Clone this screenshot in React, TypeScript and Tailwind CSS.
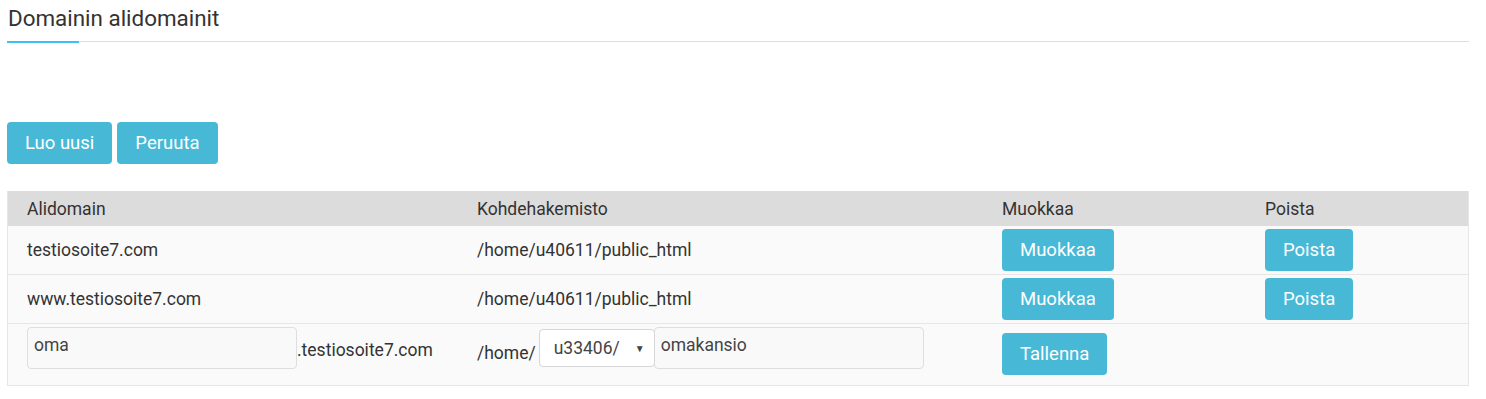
export default function App() {
  const rows = [
    { domain: "testiosoite7.com", dir: "/home/u40611/public_html" },
    { domain: "www.testiosoite7.com", dir: "/home/u40611/public_html" },
  ];

  const btn =
    "rounded-[4px] bg-[#47b9d6] px-[18px] h-[42px] text-[18.5px] text-white leading-none";

  return (
    <div className="min-h-[399px] bg-white font-['Roboto',sans-serif] text-[#333]">
      {/* Title */}
      <div className="px-[7px] pt-[5px]">
        <h1 className="pl-[1px] text-[22.4px] leading-[26px] text-[#333]">
          Domainin alidomainit
        </h1>
        <div className="mt-[10px] flex w-[1462px] items-start">
          <div className="h-[2px] w-[72px] bg-[#3cc2ee]" />
          <div className="h-[1px] flex-1 bg-[#dedede]" />
        </div>
      </div>

      {/* Actions */}
      <div className="mt-[79px] flex gap-[5px] px-[7px]">
        <button className={btn}>Luo uusi</button>
        <button className={btn}>Peruuta</button>
      </div>

      {/* Table */}
      <div className="mx-[7px] mt-[27px] w-[1462px] border-x border-b border-[#e6e6e6] text-[17.5px]">
        <div className="flex h-[35px] items-center bg-[#dcdcdc] pt-[1px]">
          <div className="w-[450px] pl-[19px]">Alidomain</div>
          <div className="w-[525px] pl-[19px]">Kohdehakemisto</div>
          <div className="w-[263px] pl-[19px]">Muokkaa</div>
          <div className="pl-[19px]">Poista</div>
        </div>

        {rows.map((r) => (
          <div
            key={r.domain}
            className="flex h-[49px] items-center border-b border-[#e6e6e6] bg-[#fafafa]"
          >
            <div className="w-[450px] pl-[19px]">{r.domain}</div>
            <div className="w-[525px] pl-[19px]">{r.dir}</div>
            <div className="w-[263px] pl-[19px]">
              <button className={btn}>Muokkaa</button>
            </div>
            <div className="pl-[19px]">
              <button className={btn}>Poista</button>
            </div>
          </div>
        ))}

        {/* New row */}
        <div className="flex h-[61px] items-start bg-[#fafafa]">
          <div className="flex w-[450px] items-end pl-[19px] pt-[3px]">
            <input
              defaultValue="oma"
              className="h-[42px] w-[270px] rounded-[4px] border border-[#dedede] bg-[#f9f9f9] px-[6px] pb-[6px] text-[17.5px] text-[#444] outline-none"
            />
            <span className="pb-[6px]">.testiosoite7.com</span>
          </div>
          <div className="flex w-[525px] items-start pl-[19px] pt-[5px]">
            <span className="pt-[11px] pr-[3px]">/home/</span>
            <div className="relative">
              <select className="h-[38px] w-[116px] appearance-none rounded-[4px] border border-[#d6d6d6] bg-white pl-[14px] text-[17.5px] text-[#444] outline-none">
                <option>u33406/</option>
              </select>
              <span className="pointer-events-none absolute right-[10px] top-[12px] text-[10px] text-[#444]">
                ▼
              </span>
            </div>
            <input
              defaultValue="omakansio"
              className="-ml-[1px] -mt-[2px] h-[42px] w-[270px] rounded-[4px] border border-[#dedede] bg-[#f9f9f9] px-[6px] pb-[6px] text-[17.5px] text-[#444] outline-none"
            />
          </div>
          <div className="w-[263px] pl-[19px] pt-[9px]">
            <button className={btn}>Tallenna</button>
          </div>
        </div>
      </div>
    </div>
  );
}
